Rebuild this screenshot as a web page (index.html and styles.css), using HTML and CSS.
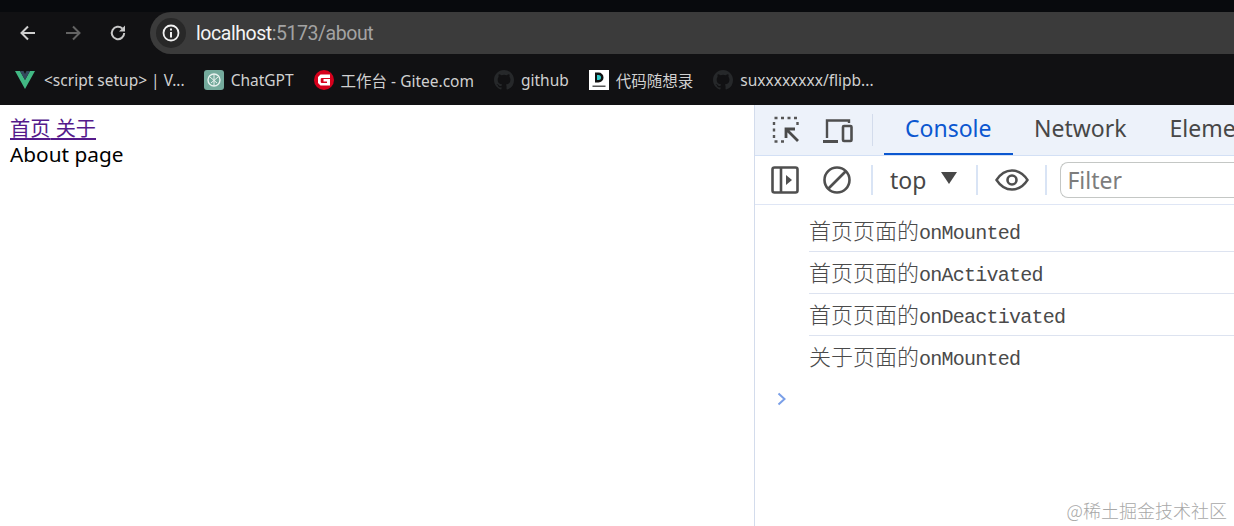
FILE: index.html
```html
<!DOCTYPE html>
<html lang="zh">
<head>
<meta charset="utf-8">
<title>About</title>
<link rel="stylesheet" href="styles.css">
</head>
<body>
<header class="chrome">
  <div class="tabstrip"></div>
  <div class="toolbar">
    <div class="nav">
      <svg class="nav-icon" viewBox="0 0 20 20"><path d="M17 10H4M10 3.500 3.500 10l6.500 6.500" fill="none" stroke="#cfcfcf" stroke-width="2"/></svg>
      <svg class="nav-icon" viewBox="0 0 20 20"><path d="M3 10h13M10 3.500l6.500 6.500-6.500 6.500" fill="none" stroke="#636363" stroke-width="2"/></svg>
      <svg class="nav-icon" viewBox="0 0 20 20"><path d="M16.200 10a6.200 6.200 0 1 1-1.900-4.500" fill="none" stroke="#c8c8c8" stroke-width="2"/><path d="M17 2.500v6h-6z" fill="#c8c8c8"/></svg>
    </div>
    <div class="omnibox">
      <span class="info"><svg viewBox="0 0 20 20" class="info-icon"><circle cx="10" cy="10" r="7.500" fill="none" stroke="#f2f2f2" stroke-width="1.800"/><path d="M10 9v5.500M10 5.500v2" stroke="#f2f2f2" stroke-width="2"/></svg></span>
      <span class="url"><span class="host">localhost</span>:5173/about</span>
    </div>
  </div>
  <nav class="bookmarks">
    <a class="bm bm-first"><svg class="fav" viewBox="0 0 20 20"><path d="M0 1h5l5 9 5-9h5L10 19z" fill="#41b883"/><path d="M5 1h3.500L10 4l1.500-3H15l-5 9z" fill="#34495e"/></svg><span>&lt;script setup&gt; | V...</span></a>
    <a class="bm"><svg class="fav" viewBox="0 0 20 20"><rect width="20" height="20" rx="3" fill="#74aa9c"/><circle cx="10" cy="10" r="6" fill="none" stroke="#e8f2ef" stroke-width="1.400"/><path d="M6 7l7 6M14 7l-7 6M10 4v12" stroke="#e8f2ef" stroke-width="1"/></svg><span>ChatGPT</span></a>
    <a class="bm"><svg class="fav" viewBox="0 0 20 20"><circle cx="10" cy="10" r="10" fill="#d6001c"/><path d="M16 4.500H6.500l-2.500 2.500v6l2.500 2.500H16v-6.500H9.500v2.500h3.500v1.500H7.500l-.800-.800v-3.400l.800-.800H16z" fill="#fff"/></svg><span>工作台 - Gitee.com</span></a>
    <a class="bm"><svg class="fav" viewBox="0 0 16 16"><path d="M8 0C3.580 0 0 3.580 0 8c0 3.540 2.290 6.530 5.470 7.590.4.070.55-.17.55-.38v-1.340c-2.230.48-2.690-1.070-2.690-1.070-.36-.92-.89-1.170-.89-1.170-.73-.5.060-.49.060-.49.810.06 1.230.83 1.230.83.720 1.230 1.880.87 2.340.67.070-.52.280-.87.510-1.070-1.780-.2-3.640-.89-3.640-3.950 0-.87.31-1.590.82-2.150-.08-.2-.36-1.020.08-2.120 0 0 .67-.21 2.200.82a7.600 7.600 0 0 1 4 0c1.530-1.040 2.200-.82 2.200-.82.44 1.100.16 1.920.08 2.120.51.560.82 1.270.82 2.150 0 3.070-1.870 3.750-3.650 3.950.29.250.54.730.54 1.480v2.200c0 .21.150.46.550.38A8 8 0 0 0 16 8c0-4.420-3.580-8-8-8z" fill="#26282a"/></svg><span>github</span></a>
    <a class="bm"><svg class="fav" viewBox="0 0 20 20"><rect width="20" height="20" fill="#fff"/><path d="M6 2.500h3.500a5 5 0 0 1 0 10H6z" fill="#111"/><path d="M8 5h1.500a2.500 2.500 0 0 1 0 5H8z" fill="#3cc"/><rect x="3.500" y="15.500" width="13" height="1.500" fill="#555"/></svg><span>代码随想录</span></a>
    <a class="bm"><svg class="fav" viewBox="0 0 16 16"><path d="M8 0C3.580 0 0 3.580 0 8c0 3.540 2.290 6.530 5.470 7.590.4.070.55-.17.55-.38v-1.340c-2.230.48-2.690-1.070-2.690-1.070-.36-.92-.89-1.170-.89-1.170-.73-.5.060-.49.060-.49.810.06 1.230.83 1.230.83.720 1.230 1.880.87 2.340.67.070-.52.280-.87.510-1.070-1.780-.2-3.640-.89-3.640-3.950 0-.87.31-1.590.82-2.150-.08-.2-.36-1.020.08-2.120 0 0 .67-.21 2.200.82a7.600 7.600 0 0 1 4 0c1.530-1.040 2.200-.82 2.200-.82.44 1.100.16 1.920.08 2.120.51.560.82 1.270.82 2.150 0 3.070-1.870 3.750-3.650 3.950.29.250.54.730.54 1.480v2.200c0 .21.150.46.550.38A8 8 0 0 0 16 8c0-4.420-3.580-8-8-8z" fill="#26282a"/></svg><span>suxxxxxxxx/flipb...</span></a>
  </nav>
</header>
<main class="viewport">
  <section class="page">
    <div class="links"><a href="#home">首页</a><a href="#about"> 关于</a></div>
    <div class="about">About page</div>
  </section>
  <aside class="devtools">
    <div class="dt-tabs">
      <div class="dt-tools">
        <svg class="dt-icon inspect" viewBox="0 0 28 28"><path d="M2.500 2h3M9 2h3M15.500 2h3M22 2h3M2 6v3M2 12.500v3M2 19v3M2.500 25.500h3M9 25.500h3M25.500 6v3" stroke="#555" stroke-width="2.400" fill="none"/><path d="M26 25 15 14M14 22v-9h9" stroke="#4a4a4a" stroke-width="2.800" fill="none"/></svg>
        <svg class="dt-icon device" viewBox="0 0 30 26"><path d="M4 21V3.500h22V6" stroke="#4f4f4f" stroke-width="2.400" fill="none"/><path d="M0 24.500h15" stroke="#4f4f4f" stroke-width="3"/><rect x="20" y="9" width="8.500" height="15" rx="1" fill="none" stroke="#4f4f4f" stroke-width="2.600"/></svg>
      </div>
      <span class="tab-sep"></span>
      <a class="tab active">Console</a>
      <a class="tab">Network</a>
      <a class="tab">Elements</a>
    </div>
    <div class="dt-bar">
      <svg class="bar-icon" viewBox="0 0 28 28"><rect x="1.500" y="1.500" width="25" height="25" rx="2" fill="none" stroke="#4f4f4f" stroke-width="2.600"/><path d="M10 2v24" stroke="#4f4f4f" stroke-width="2.600"/><path d="M15 9l6 5-6 5z" fill="#4f4f4f"/></svg>
      <svg class="bar-icon block" viewBox="0 0 28 28"><circle cx="14" cy="14" r="12.500" fill="none" stroke="#4f4f4f" stroke-width="2.600"/><path d="M5.500 22.500l17-17" stroke="#4f4f4f" stroke-width="2.600"/></svg>
      <span class="bar-sep"></span>
      <span class="context">top</span>
      <span class="caret"></span>
      <span class="bar-sep"></span>
      <svg class="eye" viewBox="0 0 34 22"><path d="M1.500 11C6 4 11 1.500 17 1.500S28 4 32.500 11C28 18 23 20.500 17 20.500S6 18 1.500 11z" fill="none" stroke="#4f4f4f" stroke-width="2.400"/><circle cx="17" cy="11" r="4.500" fill="none" stroke="#4f4f4f" stroke-width="2.600"/></svg>
      <span class="bar-sep"></span>
      <div class="filter">Filter</div>
    </div>
    <div class="console">
      <div class="msg"><span class="cjk">首页页面的</span>onMounted</div>
      <div class="msg"><span class="cjk">首页页面的</span>onActivated</div>
      <div class="msg"><span class="cjk">首页页面的</span>onDeactivated</div>
      <div class="msg last"><span class="cjk">关于页面的</span>onMounted</div>
      <svg class="prompt" viewBox="0 0 10 14"><path d="M1.500 1.500 7.500 7l-6 5.500" fill="none" stroke="#7a9fe8" stroke-width="2"/></svg>
    </div>
  </aside>
</main>
<div class="watermark">@稀土掘金技术社区</div>
</body>
</html>
```
FILE: styles.css
```css
* { box-sizing: border-box; }
html, body { margin: 0; height: 526px; overflow: hidden; }
body { position: relative; background: #fff; font-family: "Noto Sans", "Noto Sans CJK SC", sans-serif; }

.chrome { height: 105px; background: #111113; color: #d0d0d0; }
.tabstrip { height: 12px; background: #080a0d; }
.toolbar { height: 42px; display: flex; align-items: center; }
.nav { width: 150px; flex: none; display: flex; align-items: center; gap: 25px; padding-left: 18px; }
.nav-icon { width: 20px; height: 20px; flex: none; }
.omnibox { flex: 1; height: 42px; background: #3b3b3b; border-radius: 21px 0 0 21px; display: flex; align-items: center; padding-left: 6px; }
.info { width: 30px; height: 30px; border-radius: 50%; background: #282828; display: flex; align-items: center; justify-content: center; }
.info-icon { width: 20px; height: 20px; }
.url { margin-left: 10px; font-family: Roboto, sans-serif; font-size: 19.5px; letter-spacing: -.45px; color: #a3a3a3; }
.host { color: #f4f4f4; }

.bookmarks { height: 51px; display: flex; align-items: center; gap: 20px; font-size: 15.5px; padding-left: 15px; padding-top: 1px; }
.bm { display: flex; align-items: center; gap: 7px; white-space: nowrap; flex: none; }
.bm-first { gap: 9px; margin-right: -1px; }
.fav { width: 20px; height: 20px; flex: none; }

.viewport { height: 421px; display: flex; }
.page { width: 754px; flex: none; padding: 10px; font-size: 20.2px; line-height: 26px; color: #000; }
.links a { color: #551a8b; text-decoration: underline; }
.about { font-size: 20.8px; }

.devtools { flex: 1; min-width: 0; border-left: 1px solid #d3dcec; overflow: hidden; }
.dt-tabs { height: 51px; background: #edf2fa; border-bottom: 1px solid #d3e0f5; display: flex; align-items: center; }
.dt-tools { display: flex; align-items: center; gap: 23px; padding-left: 17px; width: 117px; flex: none; }
.dt-icon { flex: none; }
.inspect { width: 28px; height: 28px; }
.device { width: 30px; height: 26px; }
.tab-sep { width: 1px; height: 32px; background: #d3dcec; flex: none; }
.tab { height: 50px; display: flex; align-items: center; font-size: 23px; color: #474747; padding: 0 21.5px 4px; flex: none; white-space: nowrap; }
.tab.active { color: #0b57d0; border-bottom: 2px solid #0b57d0; margin-left: 11px; padding: 0 21px 2px; }

.dt-bar { height: 49px; background: #fff; border-bottom: 1px solid #dfe6f5; display: flex; align-items: center; }
.bar-icon { width: 28px; height: 28px; flex: none; margin-left: 16px; }
.bar-icon.block { margin-left: 24px; }
.bar-sep { width: 2px; height: 30px; background: #d9e4f5; flex: none; margin-left: 20px; }
.context { font-size: 23px; color: #474747; margin-left: 17px; }
.caret { width: 0; height: 0; margin-left: 15px; margin-right: -1px; margin-bottom: 5px; border-left: 8px solid transparent; border-right: 8px solid transparent; border-top: 12px solid #474747; flex: none; }
.eye { width: 34px; height: 22px; flex: none; margin-left: 17px; }
.eye + .bar-sep { margin-left: 16px; }
.filter { margin-left: 13px; flex: 1; height: 36px; border: 1px solid #c4c7c5; border-right: 0; border-radius: 8px 0 0 8px; font-size: 23px; line-height: 34px; color: #7d7d7d; padding-left: 6px; }

.console { padding: 5px 0 0 54px; }
.msg { height: 42px; border-bottom: 1px solid #dde3f0; font-family: "Liberation Mono", "Noto Sans CJK SC", monospace; font-size: 20px; letter-spacing: -.75px; line-height: 38px; color: #4a4a4a; white-space: nowrap; }
.msg.last { border-bottom: 0; }
.cjk { font-family: "Noto Sans CJK SC", sans-serif; font-size: 22px; letter-spacing: 0; font-weight: 300; }
.prompt { display: block; width: 10px; height: 14px; margin: 14px 0 0 -32px; }

.watermark { position: absolute; right: 7px; bottom: 5px; font-size: 18px; line-height: 22px; font-family: "Noto Sans CJK SC", sans-serif; color: #a8a8a8; font-weight: 300; }
```
